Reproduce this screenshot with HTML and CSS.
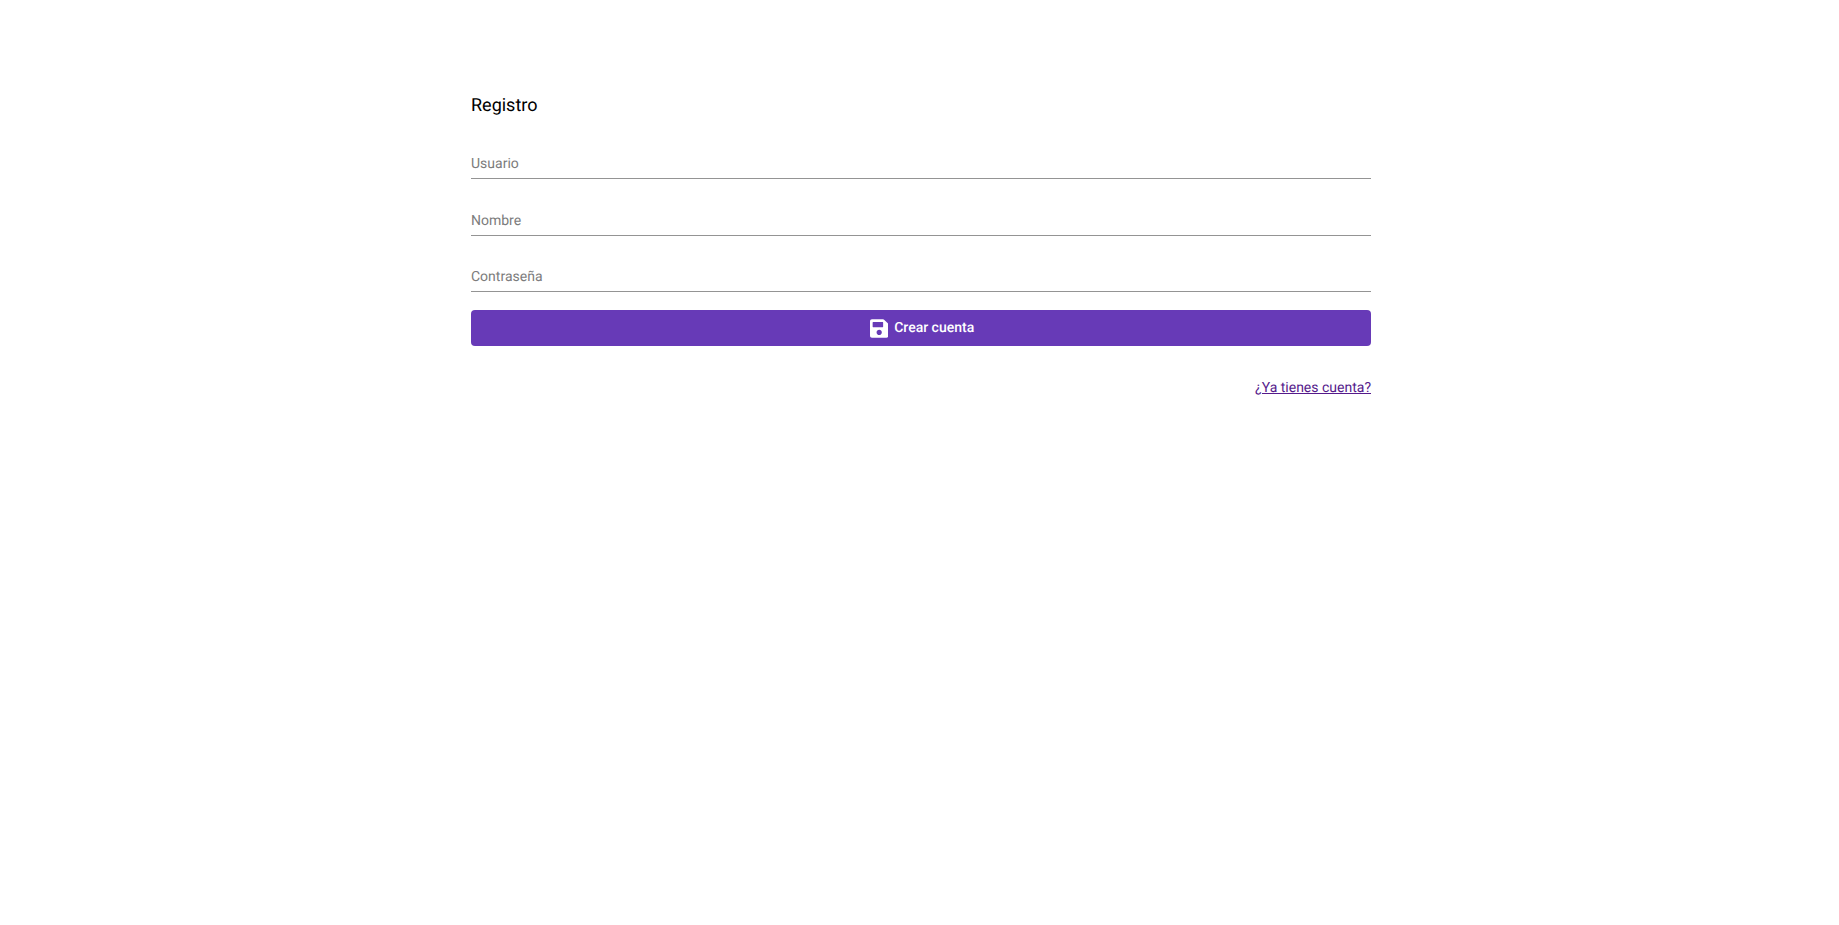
FILE: index.html
```html
<!DOCTYPE html>
<html lang="es">
<head>
    <meta charset="UTF-8">
    <title>Registro</title>
    <link rel="stylesheet" href="styles.css">
</head>
<body>
    <div class="container">
        <h1 class="title">Registro</h1>
        <form class="form">
            <input class="field" type="text" placeholder="Usuario">
            <input class="field" type="text" placeholder="Nombre">
            <input class="field" type="password" placeholder="Contraseña">
            <button class="submit" type="button">
                <svg class="submit-icon" viewBox="0 0 448 512" fill="currentColor">
                    <path d="M433.941 129.941l-83.882-83.882A48 48 0 0 0 316.118 32H48C21.49 32 0 53.49 0 80v352c0 26.51 21.49 48 48 48h352c26.51 0 48-21.49 48-48V163.882a48 48 0 0 0-14.059-33.941zM224 416c-35.346 0-64-28.654-64-64 0-35.346 28.654-64 64-64s64 28.654 64 64c0 35.346-28.654 64-64 64zm96-304.52V212c0 6.627-5.373 12-12 12H76c-6.627 0-12-5.373-12-12V108c0-6.627 5.373-12 12-12h228.52c3.183 0 6.235 1.264 8.485 3.515l3.48 3.48A11.996 11.996 0 0 1 320 111.48z"/>
                </svg>
                <span>Crear cuenta</span>
            </button>
        </form>
        <div class="links">
            <a class="login-link" href="#">¿Ya tienes cuenta?</a>
        </div>
    </div>
</body>
</html>
```

FILE: styles.css
```css
body {
    margin: 0;
    padding-left: 3px;
    background: #ffffff;
    font-family: Roboto, sans-serif;
    text-rendering: geometricPrecision;
}

.container {
    width: 900px;
    margin: 0 auto;
    padding-top: 94px;
}

.title {
    margin: 0;
    font-size: 18px;
    font-weight: 400;
    line-height: 24px;
    color: #000000;
}

.form {
    display: flex;
    flex-direction: column;
    margin-top: 30px;
}

.field {
    height: 28px;
    margin-bottom: 25.5px;
    padding: 2px 0 0;
    border: none;
    border-bottom: 1px solid #949494;
    outline: none;
    font-family: Roboto, sans-serif;
    font-size: 14px;
    text-rendering: geometricPrecision;
    background: transparent;
}

.field::placeholder {
    color: #7c7c7c;
    opacity: 1;
}

.field:nth-child(3) {
    margin-bottom: 18px;
}

.submit {
    display: flex;
    justify-content: center;
    align-items: center;
    gap: 6px;
    height: 36px;
    padding: 0 0 0 2px;
    border: none;
    border-radius: 4px;
    background: #673ab7;
    color: #ffffff;
    font-family: Roboto, sans-serif;
    font-size: 14px;
    font-weight: 500;
    text-rendering: geometricPrecision;
    cursor: pointer;
}

.submit-icon {
    width: 18.4px;
    height: 21px;
    margin-top: 1px;
}

.links {
    display: flex;
    justify-content: flex-end;
    margin-top: 33px;
}

.login-link {
    font-size: 14px;
    line-height: 18px;
    color: #551a8b;
}
```
